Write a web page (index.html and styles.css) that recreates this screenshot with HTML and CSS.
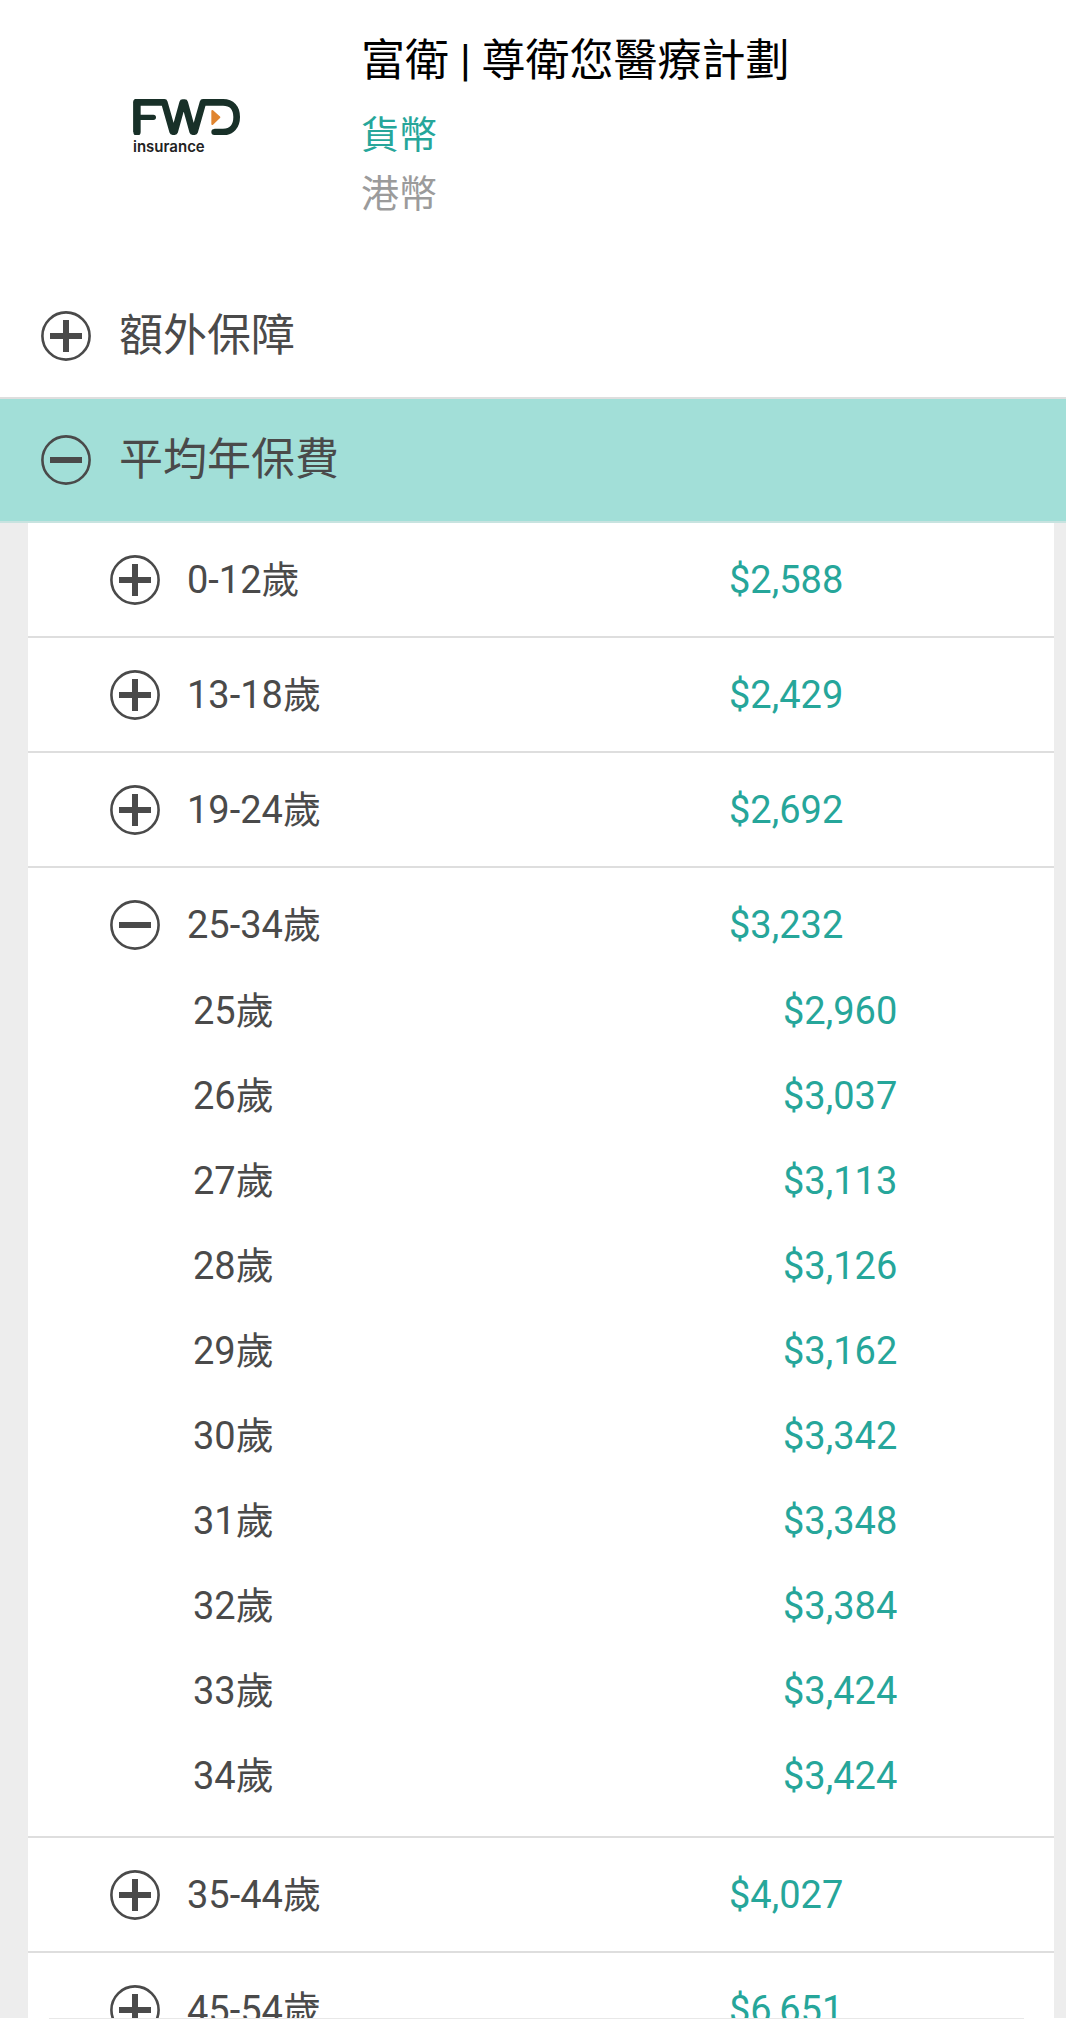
FILE: index.html
```html
<!DOCTYPE html>
<html lang="zh-Hant">
<head>
    <meta charset="UTF-8">
    <meta name="viewport" content="width=device-width, initial-scale=1.0">
    <title>富衛 | 尊衛您醫療計劃</title>
    <link rel="stylesheet" href="styles.css">
</head>
<body>

    <svg width="0" height="0" class="defs" aria-hidden="true">
        <symbol id="icon-plus" viewBox="0 0 50 50">
            <circle cx="25" cy="25" r="23.6" fill="none" stroke="currentColor" stroke-width="2.6"/>
            <path d="M9 25H41M25 9V41" stroke="currentColor" stroke-width="6"/>
        </symbol>
        <symbol id="icon-minus" viewBox="0 0 50 50">
            <circle cx="25" cy="25" r="23.6" fill="none" stroke="currentColor" stroke-width="2.6"/>
            <path d="M9 25H41" stroke="currentColor" stroke-width="6"/>
        </symbol>
    </svg>

    <main>
        <header class="plan">
            <div class="logo">
                <svg viewBox="69 57 322 108" role="img" aria-label="FWD">
                    <g fill="none" stroke="#183028" stroke-linejoin="round">
                        <path d="M79 156V67H162L187 155H193L217 68H223L247 155H253L278 67H338C364 67 379 84 379 111S364 156 338 156H312" stroke-width="20"/>
                        <path d="M80 156V67" stroke-width="22" stroke-linecap="round"/>
                        <path d="M82 112H129" stroke-width="16" stroke-linecap="round"/>
                        <path d="M312 156H316" stroke-width="18" stroke-linecap="round"/>
                    </g>
                    <path d="M306 93L327 112L306 132Z" fill="#e08530" stroke="#e08530" stroke-width="6" stroke-linejoin="round"/>
                </svg>
                <span>insurance</span>
            </div>
            <div class="plan-info">
                <h1>富衛 | 尊衛您醫療計劃</h1>
                <p class="label">貨幣</p>
                <p class="value">港幣</p>
            </div>
        </header>

        <button class="section"><svg class="icon"><use href="#icon-plus"/></svg>額外保障</button>
        <button class="section open" aria-expanded="true"><svg class="icon"><use href="#icon-minus"/></svg>平均年保費</button>

        <div class="ages">
            <div class="group">
                <button class="age"><svg class="icon"><use href="#icon-plus"/></svg><span>0-12歲</span><span class="price">$2,588</span></button>
            </div>
            <div class="group">
                <button class="age"><svg class="icon"><use href="#icon-plus"/></svg><span>13-18歲</span><span class="price">$2,429</span></button>
            </div>
            <div class="group">
                <button class="age"><svg class="icon"><use href="#icon-plus"/></svg><span>19-24歲</span><span class="price">$2,692</span></button>
            </div>
            <div class="group open">
                <button class="age" aria-expanded="true" onclick="toggleGroup(this)"><svg class="icon"><use href="#icon-minus"/></svg><span>25-34歲</span><span class="price">$3,232</span></button>
                <table class="years">
                    <tr><th scope="row">25歲</th><td>$2,960</td></tr>
                    <tr><th scope="row">26歲</th><td>$3,037</td></tr>
                    <tr><th scope="row">27歲</th><td>$3,113</td></tr>
                    <tr><th scope="row">28歲</th><td>$3,126</td></tr>
                    <tr><th scope="row">29歲</th><td>$3,162</td></tr>
                    <tr><th scope="row">30歲</th><td>$3,342</td></tr>
                    <tr><th scope="row">31歲</th><td>$3,348</td></tr>
                    <tr><th scope="row">32歲</th><td>$3,384</td></tr>
                    <tr><th scope="row">33歲</th><td>$3,424</td></tr>
                    <tr><th scope="row">34歲</th><td>$3,424</td></tr>
                </table>
            </div>
            <div class="group">
                <button class="age"><svg class="icon"><use href="#icon-plus"/></svg><span>35-44歲</span><span class="price">$4,027</span></button>
            </div>
            <div class="group">
                <button class="age"><svg class="icon"><use href="#icon-plus"/></svg><span>45-54歲</span><span class="price">$6,651</span></button>
            </div>
        </div>
    </main>

    <footer></footer>

    <script>
        function toggleGroup(button) {
            const open = button.parentElement.classList.toggle("open");
            button.setAttribute("aria-expanded", open);
            button.querySelector("use").setAttribute("href", open ? "#icon-minus" : "#icon-plus");
        }
    </script>

</body>
</html>
```
FILE: styles.css
```css
* {
    box-sizing: border-box;
}
body {
    margin: 0;
    height: 100vh;
    display: flex;
    flex-direction: column;
    font-family: Roboto, "Noto Sans CJK TC", sans-serif;
    font-size: 38px;
    line-height: 48px;
    color: #4a4a4a;
    background: white;
}
.defs { position: absolute; }
main {
    flex: 1;
    min-height: 0;
    overflow-y: auto;
    scrollbar-width: none;
}
button {
    display: flex;
    align-items: center;
    width: 100%;
    border: none;
    background: none;
    font: inherit;
    color: inherit;
    text-align: left;
    cursor: pointer;
}
.icon {
    flex: none;
    width: 50px;
    height: 50px;
    margin-right: 28px;
}

/* plan header */
.plan {
    display: flex;
    padding: 29px 0 51px 133px;
}
.logo {
    width: 228px;
    padding-top: 70px;
    font: 600 15px/20px Inter, sans-serif;
    color: #222;
}
.logo svg {
    display: block;
    width: 108px;
    height: 36px;
}
.logo span {
    display: block;
    margin-top: 2px;
}
.plan-info {
    flex: 1;
}
.plan h1, .plan p {
    margin: 0;
    font-weight: normal;
}
.plan h1 {
    font-size: 44px;
    line-height: 64px;
    margin-bottom: 13px;
    color: black;
}
.plan p { line-height: 59px; }
.plan .label { color: #26a69a; }
.plan .value { color: #9b9b9b; }

/* top level sections */
.section {
    height: 124px;
    padding: 0 41px;
    font-size: 44px;
    border-bottom: 2px solid #dedede;
}
.section.open {
    background: #a2dfd8;
    border-bottom-color: #c8e3e0;
}

/* premiums by age */
.ages {
    padding: 0 12px 0 28px;
    background: #ededed;
}
.group {
    background: white;
    border-bottom: 2px solid #dedede;
}
.age {
    height: 113px;
    padding: 0 0 0 82px;
}
.age .icon { margin-right: 27px; }
.price {
    width: 325px;
    margin-left: auto;
    color: #26a69a;
}
.years {
    display: none;
    width: 100%;
    border-collapse: collapse;
}
.group.open .years { display: table; }
.group.open .age { margin-bottom: -13px; }
.group.open { padding-bottom: 18px; }
.years th, .years td {
    height: 85px;
    padding: 0;
    text-align: left;
    font-weight: normal;
}
.years th { padding-left: 165px; }
.years td {
    width: 271px;
    color: #26a69a;
}

footer {
    height: 21px;
    margin: 0 42px 0 49px;
    border-top: 1px solid #e8e8e8;
}
```
